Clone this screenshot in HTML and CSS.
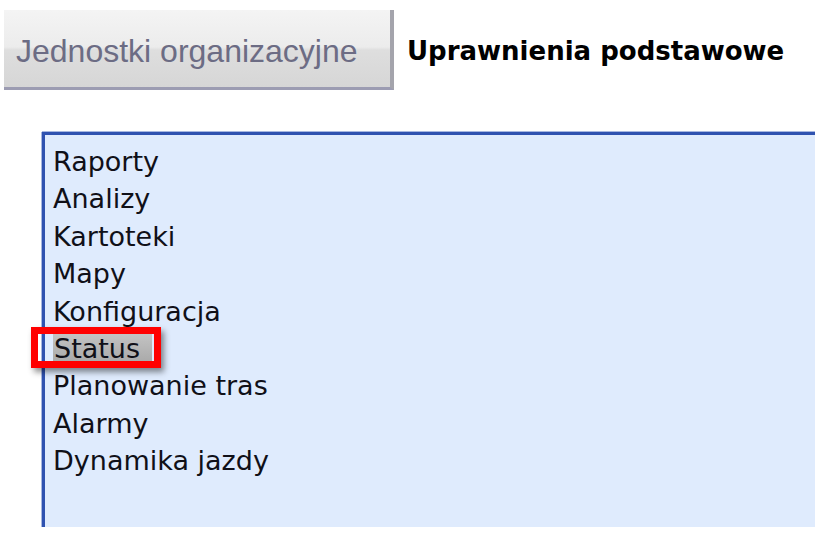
FILE: index.html
```html
<!DOCTYPE html>
<html lang="pl">
<head>
  <meta charset="UTF-8">
  <meta name="viewport" content="width=device-width, initial-scale=1.0">
  <title>Uprawnienia podstawowe</title>
  <link rel="stylesheet" href="styles.css">
</head>
<body>
  <div class="tabs">
    <div class="tab tab-inactive">Jednostki organizacyjne</div>
    <div class="tab tab-active">Uprawnienia podstawowe</div>
  </div>

  <div class="panel">
    <ul class="modules">
      <li>Raporty</li>
      <li>Analizy</li>
      <li>Kartoteki</li>
      <li>Mapy</li>
      <li>Konfiguracja</li>
      <li class="selected"><span class="highlight">Status</span><span class="marker"></span></li>
      <li>Planowanie tras</li>
      <li>Alarmy</li>
      <li>Dynamika jazdy</li>
    </ul>
  </div>
</body>
</html>
```

FILE: styles.css
```css
body {
  margin: 0;
  background: #ffffff;
  font-family: "DejaVu Sans", Verdana, sans-serif;
}

.tabs {
  display: flex;
  align-items: stretch;
  padding-top: 10px;
  margin-left: 4px;
  height: 80px;
}

.tab {
  display: flex;
  align-items: center;
}

.tab-inactive {
  width: 390px;
  padding: 5px 0 0 12px;
  box-sizing: border-box;
  background: linear-gradient(#f4f4f4 0%, #ececec 48%, #dedede 52%, #d6d6d6 100%);
  border-right: 4px solid #a4a4ac;
  border-bottom: 3px solid #9c9cb2;
  color: #6c6c84;
  font-family: "Liberation Sans", Arial, sans-serif;
  font-size: 32px;
}

.tab-active {
  padding: 2px 0 0 13px;
  color: #000000;
  font-size: 26px;
  font-weight: bold;
}

.panel {
  margin: 42px 0 0 42px;
  width: 773px;
  height: 395px;
  box-sizing: border-box;
  background: #dfebfd;
  border-top: 3px solid #2f52b0;
  border-left: 3px solid #2f52b0;
  box-shadow: 0 -1px 0 #a8b8e0, -1px 0 0 #a8b8e0;
}

.modules {
  list-style: none;
  margin: 0;
  padding: 8px 0 0 8px;
  font-size: 27px;
  line-height: 37.4px;
  color: #101018;
}

.modules li {
  position: relative;
}

.highlight {
  background: linear-gradient(#c4c4c4, #a8a8a8);
  padding: 0 12px 0 1px;
}

.marker {
  position: absolute;
  left: -22px;
  top: -3px;
  width: 130px;
  height: 41px;
  box-sizing: border-box;
  border: 7px solid #ff0000;
  box-shadow: 3px 4px 6px rgba(0, 0, 0, 0.45);
}
```
